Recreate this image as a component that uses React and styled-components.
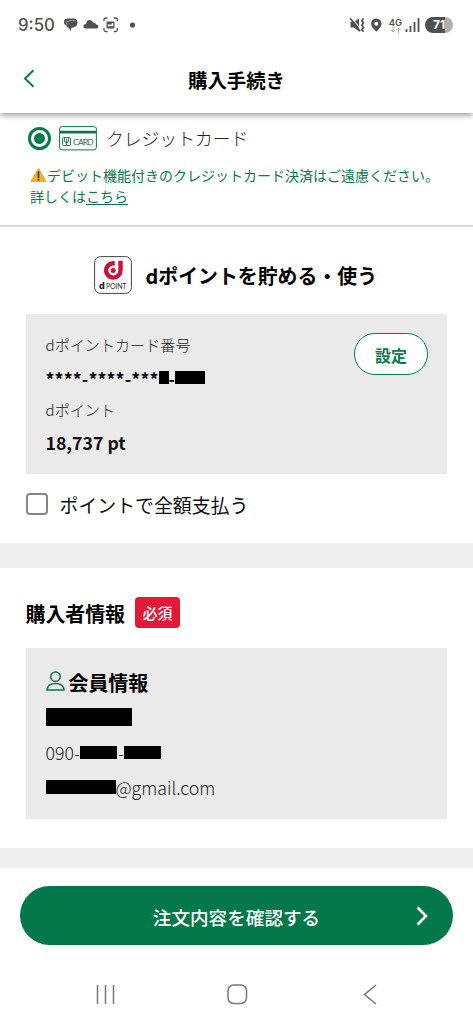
import React from 'react';
import styled, { createGlobalStyle } from 'styled-components'

const GlobalStyle = createGlobalStyle`
  * {
    box-sizing: border-box;
    margin: 0;
    padding: 0;
  }

  body {
    background: #fff;
    font-family: "Noto Sans CJK JP", "Noto Sans", sans-serif;
    color: #111;
  }

  svg {
    display: block;
    flex: none;
  }
`
const Page = styled.div`
  display: flex;
  flex-direction: column;
  height: 1024px;
  overflow: hidden;
  white-space: nowrap;
`
const StatusBar = styled.div`
  display: flex;
  align-items: center;
  height: 50px;
  padding: 0 20px 0 18px;
  position: relative;
  z-index: 1;
  background: #fff;
  color: #505050;
`
const Time = styled.div`
  font-family: Inter, sans-serif;
  font-weight: 500;
  font-size: 16.8px;
  line-height: 20px;
  width: 45px;
`
const Spacer = styled.div`
  flex: 1;
`
const Network = styled.div`
  display: flex;
  flex-direction: column;
  align-items: center;
  width: 13px;
  margin: 0 3px 0 7px;
  font-family: Inter, sans-serif;
  font-weight: 600;
  font-size: 9.5px;
  line-height: 9px;
`
const Battery = styled.div`
  display: flex;
  align-items: center;
  justify-content: center;
  width: 28px;
  height: 16px;
  margin-left: 5px;
  border-radius: 8px;
  background: linear-gradient(90deg, #505050 71%, #b0b0b0 71%);
  color: #fff;
  font-family: Inter, sans-serif;
  font-weight: 700;
  font-size: 12px;
  line-height: 16px;
`
const Header = styled.header`
  display: grid;
  grid-template-columns: 60px 1fr 60px;
  align-items: center;
  height: 63px;
  padding-bottom: 4px;
  position: relative;
  background: #fff;
  box-shadow: 0 3px 5px rgba(0, 0, 0, .33);

  svg {
    margin: -2px 0 0 23px;
  }
`
const Title = styled.h1`
  text-align: center;
  font-weight: 700;
  font-size: 19.4px;
  line-height: 28px;
  color: #000;
`
const Payment = styled.section`
  height: 114px;
  padding: 11px 0 0 28px;
  border-bottom: 2px solid #dadada;
`
const PaymentOption = styled.div`
  display: flex;
  align-items: center;
  height: 28px;
  font-weight: 300;
  font-size: 17.8px;
  color: #222;
`
const Radio = styled.span`
  width: 23px;
  height: 23px;
  margin-right: 8px;
  border: 3px solid #0a7a4b;
  border-radius: 50%;
  background: radial-gradient(circle, #0a7a4b 5px, #fff 5.8px);
`
const OptionName = styled.span`
  margin-left: 9px;
`
const Notice = styled.p`
  display: flex;
  align-items: center;
  margin-top: 12px;
  padding-left: 2px;
  height: 22px;
  font-size: 14px;
  color: #0a7a4b;

  & + & {
    margin-top: -1px;
  }

  a {
    text-decoration: underline;
    text-underline-offset: 2px;
  }
`
const Section = styled.section`
  height: ${p => p.$height}px;
  padding: 0 26px 0 25.5px;
`
const Divider = styled.div`
  height: ${p => p.$height}px;
  background: #efefef;
`
const PointHeading = styled.div`
  display: flex;
  justify-content: center;
  align-items: center;
  gap: 13px;
  height: 87px;
  padding: 8px 1px 0 0;

  h2 {
    padding-top: 2px;
  }
`
const Heading = styled.h2`
  font-weight: 700;
  font-size: 19.9px;
  line-height: 28px;
  color: #000;
`
const Panel = styled.div`
  display: flex;
  justify-content: space-between;
  align-items: flex-start;
  height: ${p => p.$height}px;
  padding: 19px 19px 0 20px;
  background: #eaeaea;
`
const Label = styled.div`
  height: 24px;
  font-weight: 300;
  font-size: 15.1px;
  line-height: 22px;
  color: #222;
`
const Value = styled.div`
  display: flex;
  align-items: center;
  height: 41px;
  padding-bottom: 1px;
  font-weight: 700;
  font-size: 17.7px;
  color: #111;
`
const CardNumber = styled(Value)`
  padding-bottom: 0;
  letter-spacing: .1px;
`
const Mask = styled.span`
  width: ${p => p.$width}px;
  height: ${p => p.$height || 13}px;
  background: #000;
`
const SettingButton = styled.button`
  width: 74px;
  height: 42px;
  padding-top: 1px;
  border: 1px solid #0a7a4b;
  border-radius: 21px;
  background: #fff;
  color: #0a7a4b;
  font-family: inherit;
  font-weight: 700;
  font-size: 16px;
`
const CheckRow = styled.label`
  display: flex;
  align-items: center;
  height: 60px;
  font-size: 18.9px;
  color: #111;
`
const CheckBox = styled.span`
  width: 22px;
  height: 22px;
  margin-right: 12px;
  border: 2px solid #858585;
  border-radius: 4px;
`
const BuyerHeading = styled.div`
  display: flex;
  align-items: center;
  height: 80px;
  padding-top: 10px;

  h2 {
    padding-top: 2px;
  }
`
const Badge = styled.span`
  width: 45px;
  height: 31px;
  margin: -1px 0 0 10px;
  border-radius: 4px;
  background: #e51937;
  color: #fff;
  text-align: center;
  font-weight: 500;
  font-size: 15px;
  line-height: 31px;
`
const MemberTitle = styled.div`
  display: flex;
  align-items: center;
  height: 33px;

  svg {
    margin: -6px 4px 0 0;
  }

  h2 {
    margin-top: -1px;
  }
`
const InfoRow = styled.div`
  display: flex;
  align-items: center;
  height: 34.7px;
  font-weight: 300;
  font-size: 17.7px;
  color: #222;
`
const Phone = styled(InfoRow)`
  gap: .6px;
`
const Footer = styled.footer`
  padding: 18px 20px 0;
`
const ConfirmButton = styled.button`
  display: grid;
  grid-template-columns: 36px 1fr 36px;
  align-items: center;
  width: 433px;
  height: 59px;
  padding-top: 1px;
  border: 0;
  border-radius: 30px;
  background: #04784a;
  color: #fff;
  font-family: inherit;
  font-weight: 500;
  font-size: 18.6px;

  svg {
    margin: -1px 0 0 -1px;
  }
`
const SystemNav = styled.nav`
  display: flex;
  justify-content: space-between;
  padding: 39px 75px 0 76px;
`

const green = '#0a7a4b'

const StatusIcons = () => (
    <svg width="76" height="18" viewBox="0 0 76 18">
        <g fill="#505050">
            <path d="M5 2.500h5.500q4 .2 4 4 0 4.500-6.300 5.500L8 15.500 5.800 12q-2-.2-2.300-2.500Q.8 9 1 5.500q.3-3 4-3z" />
            <path d="M3.500 8.500Q3 5 6.500 4.700h6" fill="none" stroke="#bbb" strokeWidth=".7" />
            <path d="M22.500 12.500q-2.200-.2-2.200-2.200.3-2.200 2.700-2.300 .6-3.800 3.800-4 2.500 0 3.600 2.800 2.200-.2 3 1.700 2 .3 2.100 2-.1 2-2 2z" />
            <circle cx="69.500" cy="9" r="2.600" />
            <path fillRule="evenodd" d="M44.500 5.500h6q1 0 1 1v5q0 1-1 1h-6q-1 0-1-1v-5q0-1 1-1zm.3 4.700h5.500V7h-1.500v1.500h-4z" />
        </g>
        <path d="M41 5V3.500Q41 2 42.500 2h2M50.800 2h2q1.500 0 1.500 1.500V5M54.300 12v2q0 1.500-1.500 1.500h-2M44.500 15.500h-2q-1.500 0-1.500-1.500v-2" fill="none" stroke="#505050" strokeWidth="1.300" />
    </svg>
)

const MuteAndPin = () => (
    <svg width="33" height="16" viewBox="0 0 33 16">
        <path d="M1.500 5h3.500L10 1.500v13L5 10.500H1.500z" fill="#505050" />
        <path d="M2.500.5l9.500 12" stroke="#fff" strokeWidth="1.200" />
        <path d="M1.200 1.200l10 13" stroke="#505050" strokeWidth="1.500" />
        <path d="M14.500 1.500l-1.700 2.200 1.700 2.200-1.700 2.200 1.700 2.200-1.700 2.200 1.700 2.200" fill="none" stroke="#505050" strokeWidth="1.700" />
        <path fillRule="evenodd" d="M27.300 1.500q5 .3 5.200 5.200 0 3-5.200 8-5.200-5-5.200-8 .2-4.900 5.200-5.200zm0 3.200a2 2 0 1 0 0 4 2 2 0 0 0 0-4z" fill="#505050" />
    </svg>
)

const Signal = () => (
    <svg width="15" height="16" viewBox="0 0 15 16">
        <path d="M1.500 12v3M5.500 9v6M9.500 5v10M13.500 1v14" stroke="#505050" strokeWidth="1.800" />
    </svg>
)

const CardIcon = () => (
    <svg width="38" height="25" viewBox="0 0 38 25">
        <rect x=".6" y=".6" width="36.800" height="23.300" rx="2.500" fill="#fff" stroke={green} strokeWidth="1" />
        <path d="M1 6.200h36" stroke={green} strokeWidth="2.800" />
        <rect x="3.500" y="11.500" width="8" height="8" rx="1" fill="none" stroke={green} strokeWidth=".9" />
        <path d="M5.500 11.500v3.500q0 1.500 2 1.500t2-1.500v-3.500M7.500 13v6" fill="none" stroke={green} strokeWidth=".9" />
        <text x="14" y="18.700" fontFamily="Lato, sans-serif" fontSize="8.500" textLength="20.500" fill={green} stroke={green} strokeWidth=".25">CARD</text>
    </svg>
)

const WarningIcon = () => (
    <svg width="17" height="16" viewBox="0 0 17 16">
        <path d="M8.500 2L15.700 14.300H1.300z" fill="#fbb034" stroke="#f6a92e" strokeWidth="1.500" strokeLinejoin="round" />
        <path d="M8.500 5v5.500" stroke="#443b35" strokeWidth="1.700" strokeLinecap="round" />
        <circle cx="8.500" cy="12.800" r="1" fill="#443b35" />
    </svg>
)

const PointLogo = () => (
    <svg width="38" height="38" viewBox="0 0 38 38">
        <rect x=".6" y=".6" width="36.800" height="36.800" rx="6" fill="#fff" stroke="#444" strokeWidth="1" />
        <path d="M20.800 7.200H19a7.200 7.200 0 1 0 7.500 7.200V4.800" fill="none" stroke="#c8143c" strokeWidth="4.400" />
        <circle cx="19.200" cy="14.400" r="2.500" fill="#c8143c" />
        <text x="4.900" y="32.800" fontFamily="Inter, sans-serif" fontWeight="800" fontSize="9" fill="#222">d</text>
        <text x="12" y="32.700" fontFamily="Lato, sans-serif" fontSize="7" textLength="20.500" fill="#333">POINT</text>
    </svg>
)

const App = () => {
    return (
        <Page>
            <GlobalStyle />
            <StatusBar>
                <Time>9:50</Time>
                <StatusIcons />
                <Spacer />
                <MuteAndPin />
                <Network>
                    4G
                    <svg width="12" height="6" viewBox="0 0 12 6">
                        <path d="M3 0v5M1 3l2 2 2-2M8.500 6V1M6.500 3l2-2 2 2" fill="none" stroke="#aaa" />
                    </svg>
                </Network>
                <Signal />
                <Battery>71</Battery>
            </StatusBar>
            <Header>
                <svg width="12" height="19" viewBox="0 0 12 19">
                    <path d="M10.500 1.200L2 9.500l8.500 8.300" fill="none" stroke={green} strokeWidth="2" />
                </svg>
                <Title>購入手続き</Title>
            </Header>
            <Payment>
                <PaymentOption>
                    <Radio />
                    <CardIcon />
                    <OptionName>クレジットカード</OptionName>
                </PaymentOption>
                <Notice>
                    <WarningIcon />
                    デビット機能付きのクレジットカード決済はご遠慮ください。
                </Notice>
                <Notice>詳しくは<a>こちら</a></Notice>
            </Payment>
            <Section $height={316}>
                <PointHeading>
                    <PointLogo />
                    <Heading>dポイントを貯める・使う</Heading>
                </PointHeading>
                <Panel $height={160}>
                    <div>
                        <Label>dポイントカード番号</Label>
                        <CardNumber>****-****-***<Mask $width={10} />-<Mask $width={30} /></CardNumber>
                        <Label>dポイント</Label>
                        <Value>18,737 pt</Value>
                    </div>
                    <SettingButton>設定</SettingButton>
                </Panel>
                <CheckRow>
                    <CheckBox />
                    ポイントで全額支払う
                </CheckRow>
            </Section>
            <Divider $height={25} />
            <Section $height={280}>
                <BuyerHeading>
                    <Heading>購入者情報</Heading>
                    <Badge>必須</Badge>
                </BuyerHeading>
                <Panel $height={171}>
                    <div>
                        <MemberTitle>
                            <svg width="19" height="20" viewBox="0 0 19 20">
                                <circle cx="9.500" cy="5.700" r="4.700" fill="none" stroke={green} strokeWidth="1.600" />
                                <path d="M1 19q.5-6.500 8.500-6.500T18 19z" fill="none" stroke={green} strokeWidth="1.600" strokeLinejoin="round" />
                            </svg>
                            <Heading>会員情報</Heading>
                        </MemberTitle>
                        <InfoRow><Mask $width={86} $height={18} /></InfoRow>
                        <Phone>090-<Mask $width={37} />-<Mask $width={37} /></Phone>
                        <InfoRow><Mask $width={70} $height={14} />@gmail.com</InfoRow>
                    </div>
                </Panel>
            </Section>
            <Divider $height={20} />
            <Footer>
                <ConfirmButton>
                    <span />
                    <span>注文内容を確認する</span>
                    <svg width="12" height="20" viewBox="0 0 12 20">
                        <path d="M1.500 1.500L10 10l-8.500 8.500" fill="none" stroke="#fff" strokeWidth="2.600" />
                    </svg>
                </ConfirmButton>
            </Footer>
            <SystemNav>
                <svg width="60" height="22" viewBox="0 0 60 22">
                    <path d="M21.500 1v19M29.500 1v19M37.500 1v19" stroke="#777" strokeWidth="1.500" />
                </svg>
                <svg width="60" height="22" viewBox="0 0 60 22">
                    <rect x="21" y="1" width="18.500" height="18.500" rx="5.500" fill="none" stroke="#777" strokeWidth="1.500" />
                </svg>
                <svg width="60" height="22" viewBox="0 0 60 22">
                    <path d="M38 1L26.500 10.500 38 20" fill="none" stroke="#777" strokeWidth="1.500" />
                </svg>
            </SystemNav>
        </Page>
    );
};

export default App;
